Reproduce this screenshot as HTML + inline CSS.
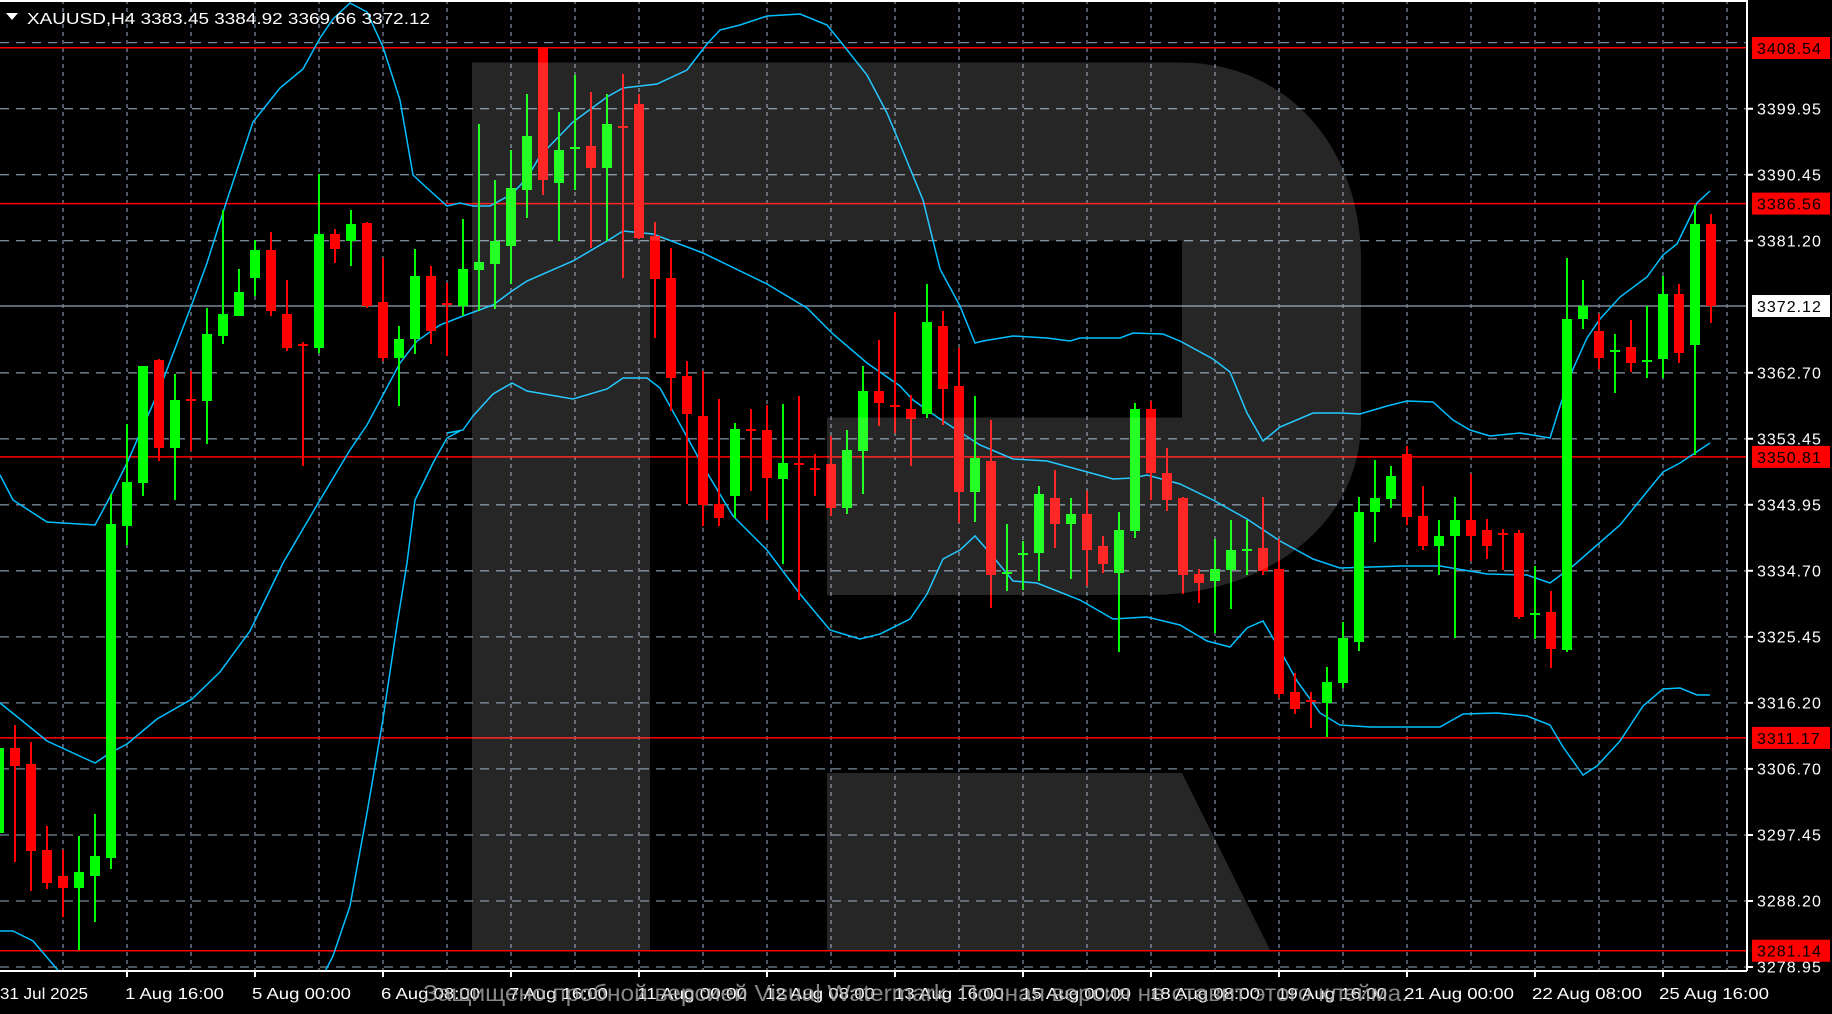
<!DOCTYPE html>
<html><head><meta charset="utf-8"><style>
html,body{margin:0;padding:0;background:#000;width:1832px;height:1014px;overflow:hidden}
svg{display:block}
text{font-family:"Liberation Sans","DejaVu Sans",sans-serif}
</style></head><body>
<svg width="1832" height="1014" viewBox="0 0 1832 1014" xmlns="http://www.w3.org/2000/svg">
<defs><clipPath id="c"><rect x="0" y="2" width="1746" height="969"/></clipPath></defs>
<rect width="1832" height="1014" fill="#000"/>
<g clip-path="url(#c)">
<g stroke="#778899" stroke-width="1.3" stroke-dasharray="9 7" fill="none">
<path d="M0 42.6H1746M0 108.7H1746M0 174.7H1746M0 240.7H1746M0 372.8H1746M0 438.8H1746M0 504.8H1746M0 570.8H1746M0 636.9H1746M0 702.9H1746M0 768.9H1746M0 835H1746M0 901H1746M0 967H1746"/>
</g>
<g stroke="#778899" stroke-width="1.3" stroke-dasharray="4 4" fill="none">
<path d="M63 0V971M127 0V971M191 0V971M255 0V971M319 0V971M383 0V971M447 0V971M511 0V971M575 0V971M639 0V971M703 0V971M767 0V971M831 0V971M895 0V971M959 0V971M1023 0V971M1087 0V971M1151 0V971M1215 0V971M1279 0V971M1343 0V971M1407 0V971M1471 0V971M1535 0V971M1599 0V971M1663 0V971M1727 0V971"/>
</g>
<path d="M0 306H1746" stroke="#778899" stroke-width="1.5"/>
<g stroke="#ff0000" stroke-width="1.5">
<path d="M0 47.8H1746M0 203.6H1746M0 456.9H1746M0 737.9H1746M0 950.7H1746"/>
</g>
<g fill="none" stroke="#00bfff" stroke-width="1.5">
<polyline points="0,475 13,500 47,522 95,525 110,497 127,463 160,388 192,304 207,263 227,200 253,122 280,88 303,69 320,38 333,19 350,3 367,12 383,47 400,100 413,175 427,188 447,206 460,203 473,206 490,206 512,194 527,178 540,156 573,122 607,97 623,88 657,84 687,70 707,44 720,30 740,25 767,16 800,14 827,25 840,41 867,75 887,113 900,144 923,200 940,269 960,306 975,343 983,341 1013,336 1047,338 1070,341 1080,338 1120,338 1133,333 1163,334 1180,341 1213,359 1230,372 1247,413 1263,441 1280,427 1313,413 1340,413 1360,414 1387,406 1407,401 1433,402 1453,420 1470,430 1490,436 1520,433 1550,438 1560,406 1573,369 1587,338 1600,319 1620,297 1647,277 1663,255 1677,244 1697,203 1710,191"/>
<polyline points="0,703 20,719 47,741 95,763 110,753 127,744 157,719 192,699 220,672 250,631 283,563 320,500 350,450 367,425 400,363 417,341 440,325 463,316 493,305 512,291 527,281 573,261 607,241 623,231 653,234 703,253 767,284 807,308 833,334 867,363 900,386 913,400 940,419 980,445 1013,459 1047,461 1113,479 1133,478 1147,475 1180,484 1213,500 1247,519 1280,541 1313,559 1340,568 1400,566 1440,566 1487,574 1527,575 1550,583 1573,566 1620,525 1663,472 1680,463 1710,443"/>
<polyline points="0,931 13,931 33,941 62,975"/>
<polyline points="318,985 333,956 350,906 367,813 383,719 397,625 407,563 415,500 433,463 447,438 460,431 447,433 463,430 473,416 493,394 512,383 527,391 573,399 607,389 623,378 647,378 660,388 703,466 733,516 767,550 800,594 830,630 860,639 880,634 910,619 927,594 943,559 960,550 975,536 990,553 1013,581 1037,583 1080,600 1113,619 1147,617 1180,625 1207,641 1230,647 1247,628 1263,621 1280,650 1297,681 1313,703 1320,713 1340,725 1370,727 1440,727 1463,714 1497,713 1527,716 1550,725 1563,747 1583,775 1597,766 1620,741 1643,706 1663,689 1680,688 1697,695 1710,695"/>
</g>
<g fill="#00ff00">
<rect x="-2" y="724" width="2" height="116"/><rect x="-6" y="748" width="10" height="85"/>
<rect x="78" y="836" width="2" height="114"/><rect x="74" y="872" width="10" height="16"/>
<rect x="94" y="814" width="2" height="108"/><rect x="90" y="856" width="10" height="20"/>
<rect x="110" y="494" width="2" height="375"/><rect x="106" y="524" width="10" height="334"/>
<rect x="126" y="424" width="2" height="121"/><rect x="122" y="482" width="10" height="44"/>
<rect x="142" y="366" width="2" height="130"/><rect x="138" y="366" width="10" height="117"/>
<rect x="174" y="374" width="2" height="126"/><rect x="170" y="400" width="10" height="48"/>
<rect x="206" y="308" width="2" height="136"/><rect x="202" y="334" width="10" height="67"/>
<rect x="222" y="210" width="2" height="134"/><rect x="218" y="314" width="10" height="22"/>
<rect x="238" y="269" width="2" height="47"/><rect x="234" y="292" width="10" height="24"/>
<rect x="254" y="240" width="2" height="56"/><rect x="250" y="250" width="10" height="28"/>
<rect x="318" y="174" width="2" height="179"/><rect x="314" y="234" width="10" height="114"/>
<rect x="350" y="210" width="2" height="56"/><rect x="346" y="224" width="10" height="17"/>
<rect x="398" y="326" width="2" height="80"/><rect x="394" y="339" width="10" height="19"/>
<rect x="414" y="249" width="2" height="105"/><rect x="410" y="276" width="10" height="63"/>
<rect x="462" y="219" width="2" height="97"/><rect x="458" y="269" width="10" height="37"/>
<rect x="478" y="124" width="2" height="187"/><rect x="474" y="262" width="10" height="8"/>
<rect x="494" y="180" width="2" height="129"/><rect x="490" y="241" width="10" height="23"/>
<rect x="510" y="150" width="2" height="134"/><rect x="506" y="188" width="10" height="58"/>
<rect x="526" y="94" width="2" height="124"/><rect x="522" y="136" width="10" height="54"/>
<rect x="558" y="112" width="2" height="129"/><rect x="554" y="150" width="10" height="33"/>
<rect x="574" y="75" width="2" height="115"/><rect x="570" y="147" width="10" height="2"/>
<rect x="606" y="94" width="2" height="147"/><rect x="602" y="124" width="10" height="44"/>
<rect x="734" y="423" width="2" height="95"/><rect x="730" y="429" width="10" height="67"/>
<rect x="782" y="404" width="2" height="160"/><rect x="778" y="463" width="10" height="16"/>
<rect x="846" y="430" width="2" height="84"/><rect x="842" y="450" width="10" height="58"/>
<rect x="862" y="366" width="2" height="128"/><rect x="858" y="391" width="10" height="60"/>
<rect x="926" y="284" width="2" height="134"/><rect x="922" y="322" width="10" height="92"/>
<rect x="974" y="396" width="2" height="126"/><rect x="970" y="458" width="10" height="34"/>
<rect x="1006" y="524" width="2" height="67"/><rect x="1002" y="572" width="10" height="2"/>
<rect x="1022" y="541" width="2" height="49"/><rect x="1018" y="553" width="10" height="2"/>
<rect x="1038" y="486" width="2" height="95"/><rect x="1034" y="494" width="10" height="59"/>
<rect x="1070" y="498" width="2" height="81"/><rect x="1066" y="514" width="10" height="10"/>
<rect x="1118" y="512" width="2" height="140"/><rect x="1114" y="530" width="10" height="43"/>
<rect x="1134" y="403" width="2" height="135"/><rect x="1130" y="409" width="10" height="122"/>
<rect x="1214" y="539" width="2" height="94"/><rect x="1210" y="569" width="10" height="12"/>
<rect x="1230" y="520" width="2" height="89"/><rect x="1226" y="550" width="10" height="20"/>
<rect x="1246" y="520" width="2" height="55"/><rect x="1242" y="549" width="10" height="2"/>
<rect x="1326" y="667" width="2" height="70"/><rect x="1322" y="682" width="10" height="21"/>
<rect x="1342" y="622" width="2" height="66"/><rect x="1338" y="638" width="10" height="45"/>
<rect x="1358" y="497" width="2" height="154"/><rect x="1354" y="512" width="10" height="130"/>
<rect x="1374" y="460" width="2" height="82"/><rect x="1370" y="498" width="10" height="14"/>
<rect x="1390" y="466" width="2" height="42"/><rect x="1386" y="476" width="10" height="23"/>
<rect x="1438" y="520" width="2" height="55"/><rect x="1434" y="536" width="10" height="10"/>
<rect x="1454" y="497" width="2" height="141"/><rect x="1450" y="520" width="10" height="16"/>
<rect x="1534" y="566" width="2" height="73"/><rect x="1530" y="613" width="10" height="2"/>
<rect x="1566" y="258" width="2" height="394"/><rect x="1562" y="319" width="10" height="331"/>
<rect x="1582" y="280" width="2" height="49"/><rect x="1578" y="306" width="10" height="13"/>
<rect x="1614" y="334" width="2" height="59"/><rect x="1610" y="350" width="10" height="2"/>
<rect x="1646" y="306" width="2" height="72"/><rect x="1642" y="360" width="10" height="2"/>
<rect x="1662" y="276" width="2" height="102"/><rect x="1658" y="294" width="10" height="65"/>
<rect x="1694" y="205" width="2" height="250"/><rect x="1690" y="224" width="10" height="121"/>
</g>
<g fill="#ff0000">
<rect x="14" y="725" width="2" height="137"/><rect x="10" y="748" width="10" height="18"/>
<rect x="30" y="742" width="2" height="149"/><rect x="26" y="764" width="10" height="87"/>
<rect x="46" y="826" width="2" height="63"/><rect x="42" y="850" width="10" height="33"/>
<rect x="62" y="850" width="2" height="67"/><rect x="58" y="876" width="10" height="12"/>
<rect x="158" y="359" width="2" height="102"/><rect x="154" y="360" width="10" height="88"/>
<rect x="190" y="371" width="2" height="80"/><rect x="186" y="399" width="10" height="2"/>
<rect x="270" y="232" width="2" height="84"/><rect x="266" y="250" width="10" height="61"/>
<rect x="286" y="280" width="2" height="71"/><rect x="282" y="314" width="10" height="34"/>
<rect x="302" y="342" width="2" height="124"/><rect x="298" y="344" width="10" height="2"/>
<rect x="334" y="229" width="2" height="34"/><rect x="330" y="234" width="10" height="15"/>
<rect x="366" y="222" width="2" height="86"/><rect x="362" y="223" width="10" height="83"/>
<rect x="382" y="258" width="2" height="103"/><rect x="378" y="302" width="10" height="56"/>
<rect x="430" y="266" width="2" height="78"/><rect x="426" y="276" width="10" height="55"/>
<rect x="446" y="283" width="2" height="73"/><rect x="442" y="303" width="10" height="2"/>
<rect x="542" y="47" width="2" height="148"/><rect x="538" y="47" width="10" height="133"/>
<rect x="590" y="92" width="2" height="156"/><rect x="586" y="146" width="10" height="22"/>
<rect x="622" y="74" width="2" height="204"/><rect x="618" y="126" width="10" height="2"/>
<rect x="638" y="94" width="2" height="145"/><rect x="634" y="104" width="10" height="134"/>
<rect x="654" y="222" width="2" height="116"/><rect x="650" y="236" width="10" height="43"/>
<rect x="670" y="248" width="2" height="163"/><rect x="666" y="278" width="10" height="100"/>
<rect x="686" y="361" width="2" height="143"/><rect x="682" y="376" width="10" height="38"/>
<rect x="702" y="371" width="2" height="155"/><rect x="698" y="416" width="10" height="89"/>
<rect x="718" y="399" width="2" height="127"/><rect x="714" y="504" width="10" height="14"/>
<rect x="750" y="409" width="2" height="82"/><rect x="746" y="429" width="10" height="2"/>
<rect x="766" y="405" width="2" height="115"/><rect x="762" y="430" width="10" height="48"/>
<rect x="798" y="396" width="2" height="204"/><rect x="794" y="463" width="10" height="2"/>
<rect x="814" y="454" width="2" height="42"/><rect x="810" y="468" width="10" height="2"/>
<rect x="830" y="436" width="2" height="80"/><rect x="826" y="464" width="10" height="44"/>
<rect x="878" y="340" width="2" height="86"/><rect x="874" y="391" width="10" height="12"/>
<rect x="894" y="312" width="2" height="121"/><rect x="890" y="405" width="10" height="2"/>
<rect x="910" y="395" width="2" height="71"/><rect x="906" y="409" width="10" height="10"/>
<rect x="942" y="311" width="2" height="114"/><rect x="938" y="326" width="10" height="63"/>
<rect x="958" y="348" width="2" height="175"/><rect x="954" y="386" width="10" height="106"/>
<rect x="990" y="420" width="2" height="188"/><rect x="986" y="461" width="10" height="114"/>
<rect x="1054" y="470" width="2" height="78"/><rect x="1050" y="498" width="10" height="26"/>
<rect x="1086" y="491" width="2" height="95"/><rect x="1082" y="514" width="10" height="36"/>
<rect x="1102" y="536" width="2" height="37"/><rect x="1098" y="546" width="10" height="18"/>
<rect x="1150" y="401" width="2" height="99"/><rect x="1146" y="409" width="10" height="64"/>
<rect x="1166" y="448" width="2" height="63"/><rect x="1162" y="473" width="10" height="27"/>
<rect x="1182" y="497" width="2" height="97"/><rect x="1178" y="498" width="10" height="77"/>
<rect x="1198" y="569" width="2" height="34"/><rect x="1194" y="574" width="10" height="9"/>
<rect x="1262" y="497" width="2" height="78"/><rect x="1258" y="548" width="10" height="23"/>
<rect x="1278" y="539" width="2" height="159"/><rect x="1274" y="569" width="10" height="125"/>
<rect x="1294" y="673" width="2" height="41"/><rect x="1290" y="692" width="10" height="17"/>
<rect x="1310" y="692" width="2" height="36"/><rect x="1306" y="700" width="10" height="2"/>
<rect x="1406" y="446" width="2" height="79"/><rect x="1402" y="454" width="10" height="63"/>
<rect x="1422" y="486" width="2" height="64"/><rect x="1418" y="516" width="10" height="30"/>
<rect x="1470" y="474" width="2" height="87"/><rect x="1466" y="520" width="10" height="16"/>
<rect x="1486" y="519" width="2" height="40"/><rect x="1482" y="530" width="10" height="16"/>
<rect x="1502" y="529" width="2" height="41"/><rect x="1498" y="533" width="10" height="2"/>
<rect x="1518" y="530" width="2" height="89"/><rect x="1514" y="533" width="10" height="84"/>
<rect x="1550" y="591" width="2" height="77"/><rect x="1546" y="612" width="10" height="37"/>
<rect x="1598" y="314" width="2" height="55"/><rect x="1594" y="331" width="10" height="27"/>
<rect x="1630" y="320" width="2" height="52"/><rect x="1626" y="347" width="10" height="16"/>
<rect x="1678" y="284" width="2" height="79"/><rect x="1674" y="294" width="10" height="59"/>
<rect x="1710" y="214" width="2" height="109"/><rect x="1706" y="224" width="10" height="82"/>
</g>
<g fill="#ffffff" fill-opacity="0.15">
<rect x="472" y="62.5" width="178" height="887.5"/>
<path d="M650 62.5H1180C1290 62.5 1361 150 1361 260V420C1361 530 1260 595 1150 595H827V417.5H1182V240.6H650Z"/>
<path d="M827 773H1182L1270 950H827Z"/>
</g>
</g>
<path d="M0 1H1747M1747 0V971M0 971H1747" stroke="#fff" stroke-width="2" fill="none"/>
<g stroke="#fff" stroke-width="2">
<path d="M1747 108.7H1753M1747 174.7H1753M1747 240.7H1753M1747 372.8H1753M1747 438.8H1753M1747 504.8H1753M1747 570.8H1753M1747 636.9H1753M1747 702.9H1753M1747 768.9H1753M1747 835H1753M1747 901H1753M1747 967H1753"/>
<path d="M127 971V977M255 971V977M383 971V977M511 971V977M639 971V977M767 971V977M895 971V977M1023 971V977M1151 971V977M1279 971V977M1407 971V977M1535 971V977M1663 971V977"/>
</g>
<g fill="#fff" font-size="16" letter-spacing="1">
<text x="1757" y="114.5">3399.95</text>
<text x="1757" y="180.5">3390.45</text>
<text x="1757" y="246.5">3381.20</text>
<text x="1757" y="378.5">3362.70</text>
<text x="1757" y="444.5">3353.45</text>
<text x="1757" y="510.5">3343.95</text>
<text x="1757" y="576.5">3334.70</text>
<text x="1757" y="642.5">3325.45</text>
<text x="1757" y="708.5">3316.20</text>
<text x="1757" y="774.5">3306.70</text>
<text x="1757" y="840.5">3297.45</text>
<text x="1757" y="906.5">3288.20</text>
<text x="1757" y="972.5">3278.95</text>
</g>
<g fill="#ff0000">
<rect x="1752" y="37" width="78" height="22"/>
<rect x="1752" y="192.6" width="78" height="22"/>
<rect x="1752" y="445.9" width="78" height="22"/>
<rect x="1752" y="726.9" width="78" height="22"/>
<rect x="1752" y="939.7" width="78" height="22"/>
</g>
<rect x="1752" y="295" width="78" height="22" fill="#fff"/>
<g fill="#000" font-size="16" letter-spacing="1">
<text x="1757" y="54">3408.54</text>
<text x="1757" y="209.6">3386.56</text>
<text x="1757" y="312">3372.12</text>
<text x="1757" y="462.9">3350.81</text>
<text x="1757" y="743.9">3311.17</text>
<text x="1757" y="956.7">3281.14</text>
</g>
<path d="M6 13H18L12 20Z" fill="#fff"/>
<text x="27" y="24" fill="#fff" font-size="16" textLength="403" lengthAdjust="spacingAndGlyphs">XAUUSD,H4  3383.45 3384.92 3369.66 3372.12</text>
<g fill="#fff" font-size="16">
<text x="0" y="999" textLength="88" lengthAdjust="spacingAndGlyphs">31 Jul 2025</text>
<text x="125" y="999" textLength="99" lengthAdjust="spacingAndGlyphs">1 Aug 16:00</text>
<text x="252" y="999" textLength="99" lengthAdjust="spacingAndGlyphs">5 Aug 00:00</text>
<text x="381" y="999" textLength="99" lengthAdjust="spacingAndGlyphs">6 Aug 08:00</text>
<text x="509" y="999" textLength="99" lengthAdjust="spacingAndGlyphs">7 Aug 16:00</text>
<text x="637" y="999" textLength="110" lengthAdjust="spacingAndGlyphs">11 Aug 00:00</text>
<text x="765" y="999" textLength="110" lengthAdjust="spacingAndGlyphs">12 Aug 08:00</text>
<text x="894" y="999" textLength="110" lengthAdjust="spacingAndGlyphs">13 Aug 16:00</text>
<text x="1021" y="999" textLength="110" lengthAdjust="spacingAndGlyphs">15 Aug 00:00</text>
<text x="1150" y="999" textLength="110" lengthAdjust="spacingAndGlyphs">18 Aug 08:00</text>
<text x="1277" y="999" textLength="110" lengthAdjust="spacingAndGlyphs">19 Aug 16:00</text>
<text x="1404" y="999" textLength="110" lengthAdjust="spacingAndGlyphs">21 Aug 00:00</text>
<text x="1532" y="999" textLength="110" lengthAdjust="spacingAndGlyphs">22 Aug 08:00</text>
<text x="1659" y="999" textLength="110" lengthAdjust="spacingAndGlyphs">25 Aug 16:00</text>
</g>
<text x="423" y="1001" fill="#a8a8a8" fill-opacity="0.8" font-size="23" textLength="985" lengthAdjust="spacingAndGlyphs">Защищено пробной версией Visual Watermark. Полная версия не ставит этого клейма.</text>
</svg>
</body></html>
